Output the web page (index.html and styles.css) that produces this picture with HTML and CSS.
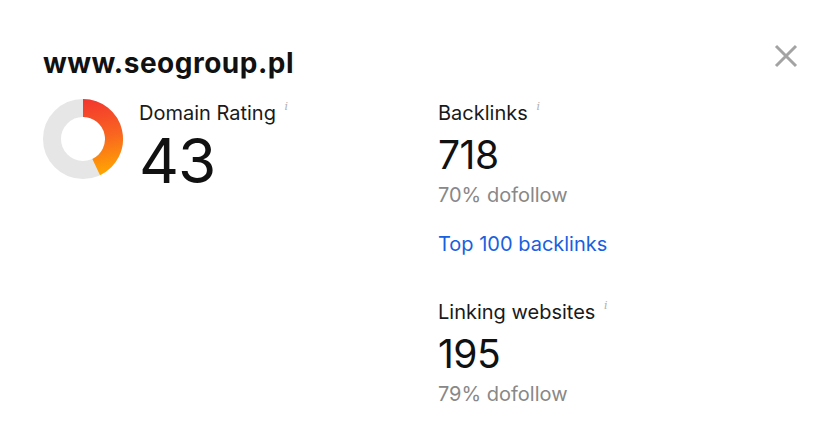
FILE: index.html
```html
<!DOCTYPE html>
<html lang="en">
<head>
<meta charset="UTF-8">
<meta name="viewport" content="width=device-width, initial-scale=1.0">
<title>www.seogroup.pl</title>
<link rel="stylesheet" href="styles.css">
</head>
<body>

<div class="panel">
<div class="header">
<h1 class="domain">www.seogroup.pl</h1>
<button class="close" aria-label="Close">
<svg width="24" height="24" viewBox="0 0 24 24"><path d="M2 2 L22 22 M22 2 L2 22" stroke="#a3a3a3" stroke-width="3" fill="none"/></svg>
</button>
</div>

<div class="stats">
<div class="rating">
<svg class="donut" width="82" height="82" viewBox="0 0 82 82">
<defs>
<linearGradient id="dr" gradientUnits="userSpaceOnUse" x1="41" y1="2" x2="56" y2="78">
<stop offset="0" stop-color="#f2362f"/>
<stop offset="0.5" stop-color="#f96420"/>
<stop offset="1" stop-color="#ffa800"/>
</linearGradient>
</defs>
<circle cx="41" cy="41" r="31" fill="none" stroke="#e6e6e6" stroke-width="18"/>
<path d="M41 10 A31 31 0 0 1 54.2 69.05" fill="none" stroke="url(#dr)" stroke-width="18"/>
</svg>
<div>
<div class="label">Domain Rating <sup class="info">i</sup></div>
<div class="big">43</div>
</div>
</div>

<div class="links">
<div class="metric">
<div class="label">Backlinks <sup class="info">i</sup></div>
<div class="value">718</div>
<div class="sub">70% dofollow</div>
<a class="more" href="#">Top 100 backlinks</a>
</div>
<div class="metric">
<div class="label">Linking websites <sup class="info">i</sup></div>
<div class="value">195</div>
<div class="sub">79% dofollow</div>
</div>
</div>
</div>
</div>

</body>
</html>
```

FILE: styles.css
```css
body {
margin: 0;
background-color: white;
font-family: Inter, "Noto Sans", sans-serif;
color: #111;
}
.panel {
padding: 46px 38px 0 42px;
}
.header {
display: flex;
justify-content: space-between;
align-items: flex-start;
}
.domain {
margin: 0;
font-size: 28px;
font-weight: 700;
letter-spacing: 0.5px;
line-height: 34px;
padding-left: 1px;
}
.close {
border: none;
background: none;
padding: 0;
margin-top: -2px;
cursor: pointer;
}
.stats {
display: flex;
margin-top: 21px;
}
.rating {
display: flex;
gap: 15px;
width: 396px;
}
.donut {
margin-top: -3px;
}
.label {
font-size: 20px;
line-height: 24px;
color: #1a1a1a;
}
.info {
font-family: "DejaVu Serif", serif;
font-style: italic;
font-size: 11px;
line-height: 0;
color: #b0b0b0;
margin-left: 3px;
vertical-align: 10px;
}
.big {
font-size: 62px;
line-height: 62px;
margin-top: 5px;
letter-spacing: -1px;
}
.links {
display: flex;
flex-direction: column;
gap: 44px;
}
.metric {
display: flex;
flex-direction: column;
}
.value {
font-size: 39px;
line-height: 44px;
margin-top: 8px;
letter-spacing: -0.5px;
}
.sub {
font-size: 20px;
line-height: 24px;
color: #888;
margin-top: 6px;
}
.more {
font-size: 20px;
line-height: 24px;
color: #1a5fe0;
text-decoration: none;
margin-top: 25px;
}
```
